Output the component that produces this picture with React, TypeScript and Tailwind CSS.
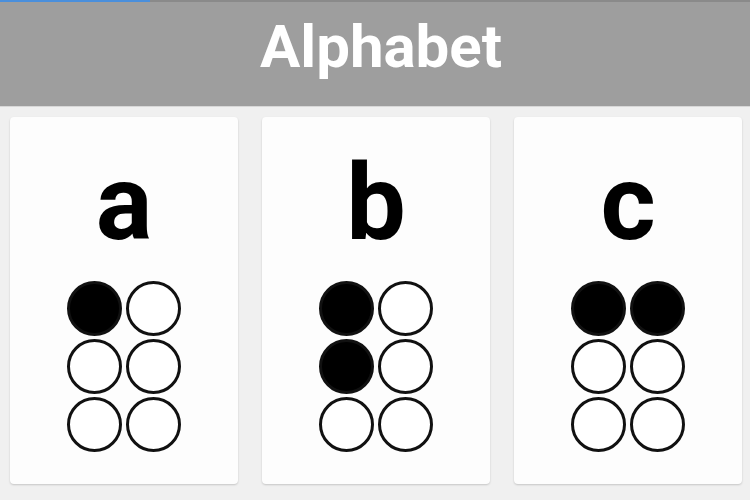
const letters: { ch: string; dots: number[] }[] = [
  { ch: "a", dots: [1] },
  { ch: "b", dots: [1, 2] },
  { ch: "c", dots: [1, 4] },
];

// braille cell order: left column 1,2,3 / right column 4,5,6
const cellOrder = [1, 4, 2, 5, 3, 6];

function BrailleCard({ ch, dots }: { ch: string; dots: number[] }) {
  return (
    <div className="flex h-[367px] flex-col items-center rounded-[4px] bg-[#fdfdfd] pt-[33px] shadow-[0_1px_2px_rgba(0,0,0,0.18)]">
      <div className="h-[106px] text-[106px] font-bold leading-none text-black">{ch}</div>
      <div className="mt-[25px] grid grid-cols-[55px_55px] gap-x-[4px] gap-y-[3px]">
        {cellOrder.map((n) => (
          <div
            key={n}
            className={`h-[55px] w-[55px] rounded-full border-[3px] border-[#111] ${
              dots.includes(n) ? "bg-black" : "bg-white"
            }`}
          />
        ))}
      </div>
    </div>
  );
}

export default function App() {
  return (
    <div className="h-[500px] w-[750px] overflow-hidden bg-[#f0f0f0] font-['Roboto','Liberation_Sans',sans-serif]">
      <div className="h-[107px] border-b border-[#d8d8d8] bg-[#9e9e9e]">
        <div className="flex h-[2px]">
          <div className="w-[150px] bg-[#4a8fdc]" />
          <div className="flex-1 bg-[#8a8a8a]" />
        </div>
        <h1 className="mt-[10px] pl-[12px] text-center text-[60px] font-bold leading-[70px] text-white">Alphabet</h1>
      </div>
      <div className="grid grid-cols-3 gap-[24px] pl-[10px] pr-[8px] pt-[10px]">
        {letters.map((l) => (
          <BrailleCard key={l.ch} ch={l.ch} dots={l.dots} />
        ))}
      </div>
    </div>
  );
}
